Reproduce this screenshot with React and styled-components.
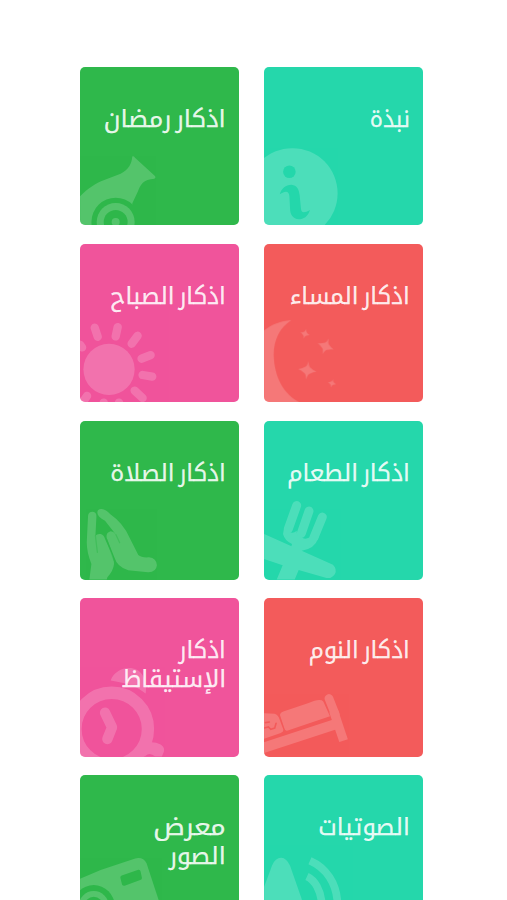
import React from "react";
import styled, { createGlobalStyle } from "styled-components";

const colors = {
  green: "#2fb84b",
  teal: "#25d7ab",
  pink: "#f0549b",
  red: "#f35b5b",
};

const GlobalStyle = createGlobalStyle`
  html {
    overflow: hidden;
  }
  body {
    margin: 0;
    background-color: #fff;
  }
`;

const Page = styled.main`
  box-sizing: border-box;
  height: 900px;
  overflow: hidden;
  padding: 66.8px 84.5px 0 80px;
  direction: rtl;
`;
const Grid = styled.div`
  display: grid;
  grid-template-columns: 158.8px 158.8px;
  grid-auto-rows: 158.6px;
  gap: 18.5px 24.6px;
`;
const Tile = styled.a`
  position: relative;
  box-sizing: border-box;
  overflow: hidden;
  padding: 38px 13px 0;
  border-radius: 5px;
  background-color: ${(props) => props.$color};
  color: ${(props) => props.$color};
`;
const Title = styled.h2`
  position: relative;
  margin: 0;
  color: rgba(255, 255, 255, 0.9);
  font-family: "Noto Kufi Arabic", "Noto Sans", "DejaVu Sans", sans-serif;
  font-size: 24px;
  font-weight: 400;
  line-height: 29px;
  word-spacing: -4px;
  -webkit-text-stroke: 0.25px rgba(255, 255, 255, 0.9);
`;
const Line = styled.span`
  display: block;
  white-space: nowrap;
  transform: scaleX(${(props) => props.$stretch});
  transform-origin: right center;
`;
const Drawing = styled.svg`
  position: absolute;
  inset: 0;
  width: 100%;
  height: 100%;
`;

// shapes are white, currentColor (the tile colour) cuts holes in them
const Icon = ({ children }) => (
  <Drawing viewBox="0 0 477 477" aria-hidden="true">
    <g opacity="0.18" fill="#fff" stroke="none" strokeLinecap="round">
      {children}
    </g>
  </Drawing>
);

const Info = () => (
  <Icon>
    <circle cx="85" cy="380" r="136" />
    <g fill="currentColor">
      <circle cx="76" cy="315" r="19" />
      <path d="M47 383C52 364 67 353 83 354C99 356 105 368 107 386L111 427C113 440 121 439 138 430C132 450 119 458 104 458C87 457 78 445 78 425L76 389C75 373 65 371 47 383Z" />
    </g>
  </Icon>
);

const Cannon = () => (
  <Icon>
    <path d="M0 389C24 365 46 350 73 340L122 321C147 308 155 291 157 269Q161 267 165 273L225 328Q229 333 223 336C190 338 181 354 174 374L157 410L157 477H0Z" />
    <circle cx="107" cy="466" r="73" fill="currentColor" />
    <circle cx="107" cy="466" r="57" />
    <circle cx="107" cy="466" r="36" fill="currentColor" />
    <circle cx="107" cy="466" r="12" />
  </Icon>
);

const Star = ({ x, y, size, turn }) => (
  <path
    transform={`translate(${x} ${y}) rotate(${turn}) scale(${size})`}
    d="M0 -1Q.1 -.35 .35 -.3Q.6 -.1 1 0Q.6 .1 .35 .3Q.1 .35 0 1Q-.1 .35 -.35 .3Q-.6 .1 -1 0Q-.6 -.1 -.35 -.3Q-.1 -.35 0 -1Z"
  />
);

const Moon = () => (
  <Icon>
    <path d="M0 260C22 242 50 231 82 229C48 250 29 288 29 333C30 400 60 454 108 477H0Z" />
    <Star x={123} y={270} size={15} turn={15} />
    <Star x={185} y={308} size={26} turn={22} />
    <Star x={130} y={380} size={28} turn={8} />
    <Star x={204} y={419} size={13} turn={15} />
  </Icon>
);

const Sun = () => (
  <Icon>
    <circle cx="87" cy="377" r="77" />
    <g stroke="#fff" strokeWidth="25">
      <path d="M44 252L53 279M113 250L107 278M173 276L155 300M212 334L185 345M188 394L217 399M164 441L188 463M0 303L6 311M21 457L9 474M71 477L70 484M117 477L119 482" />
    </g>
  </Icon>
);

const Fork = () => (
  <Icon>
    <path
      fill="none"
      stroke="#fff"
      strokeWidth="27"
      d="M98 254L73 324M135 271L112 338M175 289L150 350"
    />
    <path d="M60 322L57 340Q62 360 84 370L76 400L128 416L113 390Q152 386 164 350L146 340Q132 360 114 351Q96 347 98 330Q84 345 66 325Z" />
    <path d="M0 340L207 432Q220 445 213 460Q203 475 188 472L104 448L92 477H38L56 434L0 415Z" />
  </Icon>
);

const Hands = () => (
  <Icon>
    <path d="M24 285Q25 273 38 273Q50 275 49 288L46 345Q52 338 62 340Q72 343 75 355L86 380Q103 415 102 430Q100 450 82 470L80 477H28L34 430Q20 395 20 365Z" />
    <path d="M52 276Q52 264 65 265Q78 266 90 280Q130 308 148 350L175 403Q185 412 207 410Q230 413 231 434Q229 455 205 455L145 449Q112 440 103 410L80 352Q77 336 90 332Q98 330 108 342L75 300Q52 288 52 276Z" />
    <path
      fill="none"
      stroke="currentColor"
      strokeWidth="4"
      opacity="0.5"
      d="M46 345L52 395M80 356L102 420M108 342L119 366"
    />
  </Icon>
);

const Bed = () => (
  <Icon>
    <g stroke="#fff" fill="none">
      <path strokeWidth="31" strokeLinecap="butt" d="M-6 452L220 378" />
      <path strokeWidth="26" d="M195 302L214 350" />
      <path strokeWidth="27" strokeLinecap="butt" d="M209 340L239 429" />
    </g>
    <path d="M58 341L134 316Q168 300 178 311L198 356L69 399Q63 400 61 392L48 353Q47 346 58 341Z" />
    <path d="M0 347L31 348Q43 352 46 364L58 396Q59 402 50 406L0 423Z" />
    <path
      fill="none"
      stroke="currentColor"
      strokeWidth="5"
      d="M4 375L16 373M0 391L13 388L20 395L32 391L36 377"
    />
  </Icon>
);

const Clock = () => (
  <Icon>
    <path d="M92 248C107 207 166 197 188 232C198 252 200 268 197 287C166 262 137 256 92 248Z" />
    <circle cx="95" cy="394" r="136" fill="currentColor" />
    <circle cx="95" cy="394" r="109" fill="none" stroke="#fff" strokeWidth="37" />
    <path d="M144 477L196 437Q220 429 242 441Q257 451 251 465L246 477Z" />
    <path
      fill="none"
      stroke="#fff"
      strokeWidth="31"
      strokeLinejoin="round"
      d="M75 345L96 389L82 424"
    />
    <path d="M196 475Q210 463 226 477H196Z" fill="currentColor" />
  </Icon>
);

const Speaker = () => (
  <Icon>
    <path d="M0 337L24 272Q34 249 51 249Q68 250 78 273L112 370L126 420H0Z" />
    <g fill="none" stroke="#fff" strokeWidth="23" strokeLinecap="butt">
      <path d="M138 258C184 278 221 324 221 395" />
      <path d="M129 305C151 315 172 345 174 395" />
    </g>
  </Icon>
);

const Camera = () => (
  <Icon>
    <path d="M0 312L62 286L166 251Q190 246 200 266L244 400H0Z" />
    <g fill="currentColor">
      <path d="M125 302L175 285Q181 284 182 290L186 309Q187 314 181 316L134 333Q128 334 126 329L121 309Q120 304 125 302Z" />
      <circle cx="41" cy="394" r="63" />
    </g>
    <circle cx="41" cy="394" r="45" />
    <circle cx="41" cy="394" r="28" fill="currentColor" />
  </Icon>
);

const tiles = [
  { lines: [["نبذة", 0.92]], color: colors.teal, icon: Info },
  { lines: [["اذكار رمضان", 1.035]], color: colors.green, icon: Cannon },
  { lines: [["اذكار المساء", 0.975]], color: colors.red, icon: Moon },
  { lines: [["اذكار الصباح", 0.975]], color: colors.pink, icon: Sun },
  { lines: [["اذكار الطعام", 0.985]], color: colors.teal, icon: Fork },
  { lines: [["اذكار الصلاة", 0.975]], color: colors.green, icon: Hands },
  { lines: [["اذكار النوم", 0.97]], color: colors.red, icon: Bed },
  {
    lines: [
      ["اذكار", 0.97],
      ["الإستيقاظ", 1],
    ],
    color: colors.pink,
    icon: Clock,
  },
  { lines: [["الصوتيات", 0.99]], color: colors.teal, icon: Speaker },
  {
    lines: [
      ["معرض", 1.12],
      ["الصور", 1.02],
    ],
    color: colors.green,
    icon: Camera,
  },
];

const App = () => (
  <Page lang="ar">
    <GlobalStyle />
    <Grid>
      {tiles.map(({ lines, color, icon: TileIcon }) => (
        <Tile key={lines[0][0] + lines.length} $color={color}>
          <TileIcon />
          <Title>
            {lines.map(([text, stretch]) => (
              <Line key={text} $stretch={stretch}>
                {text}
              </Line>
            ))}
          </Title>
        </Tile>
      ))}
    </Grid>
  </Page>
);

export default App;
